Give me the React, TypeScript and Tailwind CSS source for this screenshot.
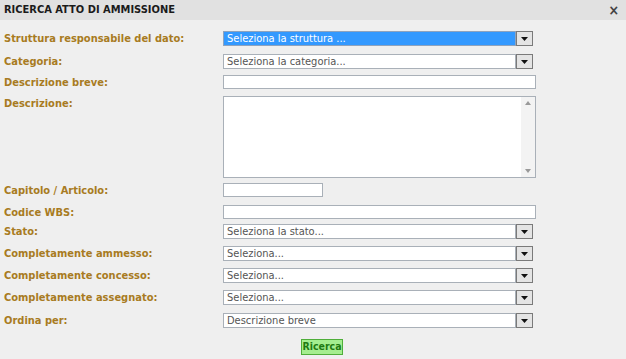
import type { ReactNode } from 'react';

const font = { fontFamily: 'Tahoma, "DejaVu Sans Condensed", "DejaVu Sans", sans-serif' };

function Arrow() {
  return (
    <span className="flex h-[15px] w-[17px] shrink-0 items-center justify-center border border-[#7a7a7a] bg-[#e4e4e4]">
      <svg width="7" height="4" viewBox="0 0 7 4">
        <path d="M0 0h7L3.5 4z" fill="#111" />
      </svg>
    </span>
  );
}

function Select({ text, active = false }: { text: string; active?: boolean }) {
  return (
    <div className="flex w-[310px] items-center">
      <div
        className={
          'flex h-[15px] flex-1 items-center border px-[3px] text-[11px] leading-none ' +
          (active ? 'border-[#8fa3bd] bg-[#3399ff] text-white' : 'border-[#a9b0b8] bg-white text-[#555]')
        }
      >
        {text}
      </div>
      <Arrow />
    </div>
  );
}

function TextBox({ w }: { w: string }) {
  return <div className={'h-[14px] border border-[#a9b0b8] bg-white ' + w} />;
}

function Row({ label, h, children }: { label: string; h: string; children: ReactNode }) {
  return (
    <div className={'flex items-start ' + h}>
      <div className="w-[223px] shrink-0 pl-1 text-[11px] font-bold leading-[15px] text-[#a87b22]">{label}</div>
      {children}
    </div>
  );
}

export default function App() {
  return (
    <div className="h-[359px] w-[626px] overflow-hidden bg-[#efefef]" style={font}>
      <div className="flex h-5 items-center justify-between bg-[#e1e1e1] pl-1 pr-[7px]">
        <span className="text-[11px] font-bold text-[#1b1b1b]">RICERCA ATTO DI AMMISSIONE</span>
        <span className="text-[14px] font-bold leading-none text-[#444]">×</span>
      </div>

      <div className="flex flex-col pt-[11px]">
        <Row label="Struttura responsabile del dato:" h="h-[23px]">
          <Select text="Seleziona la struttura ..." active />
        </Row>
        <Row label="Categoria:" h="h-[21px]">
          <Select text="Seleziona la categoria..." />
        </Row>
        <Row label="Descrizione breve:" h="h-[21px]">
          <TextBox w="w-[313px]" />
        </Row>
        <Row label="Descrizione:" h="h-[87px]">
          <div className="flex h-[82px] w-[313px] border border-[#a9b0b8] bg-white">
            <div className="flex-1" />
            <div className="flex w-[14px] flex-col items-center justify-between bg-[#f3f3f3] py-[4px]">
              <svg width="6" height="4" viewBox="0 0 6 4">
                <path d="M0 4h6L3 0z" fill="#999" />
              </svg>
              <svg width="6" height="4" viewBox="0 0 6 4">
                <path d="M0 0h6L3 4z" fill="#999" />
              </svg>
            </div>
          </div>
        </Row>
        <Row label="Capitolo / Articolo:" h="h-[22px]">
          <TextBox w="w-[100px]" />
        </Row>
        <Row label="Codice WBS:" h="h-[19px]">
          <TextBox w="w-[313px]" />
        </Row>
        <Row label="Stato:" h="h-[22px]">
          <Select text="Seleziona la stato..." />
        </Row>
        <Row label="Completamente ammesso:" h="h-[22px]">
          <Select text="Seleziona..." />
        </Row>
        <Row label="Completamente concesso:" h="h-[22px]">
          <Select text="Seleziona..." />
        </Row>
        <Row label="Completamente assegnato:" h="h-[23px]">
          <Select text="Seleziona..." />
        </Row>
        <Row label="Ordina per:" h="h-[26px]">
          <Select text="Descrizione breve" />
        </Row>
        <div className="pl-[301px]">
          <button className="flex h-4 w-[42px] items-center justify-center border border-[#4fae3a] bg-[#a4ee8f] text-[10.5px] font-bold text-[#1f7a12]">
            Ricerca
          </button>
        </div>
      </div>
    </div>
  );
}
